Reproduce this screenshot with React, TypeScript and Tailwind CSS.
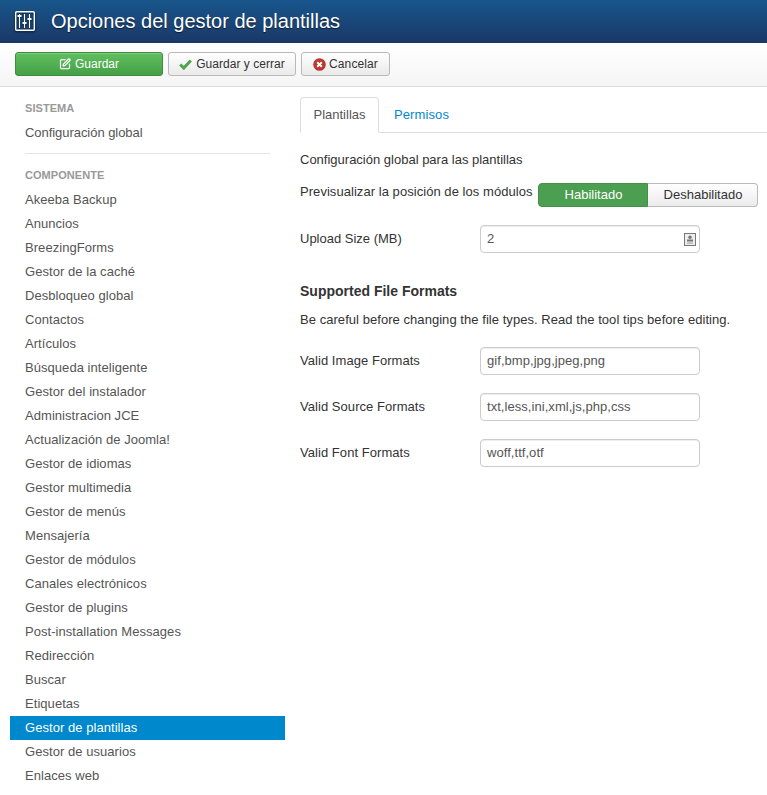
import React from 'react';
import { PenSquare } from 'lucide-react';

const components = [
  'Akeeba Backup',
  'Anuncios',
  'BreezingForms',
  'Gestor de la caché',
  'Desbloqueo global',
  'Contactos',
  'Artículos',
  'Búsqueda inteligente',
  'Gestor del instalador',
  'Administracion JCE',
  'Actualización de Joomla!',
  'Gestor de idiomas',
  'Gestor multimedia',
  'Gestor de menús',
  'Mensajería',
  'Gestor de módulos',
  'Canales electrónicos',
  'Gestor de plugins',
  'Post-installation Messages',
  'Redirección',
  'Buscar',
  'Etiquetas',
  'Gestor de plantillas',
  'Gestor de usuarios',
  'Enlaces web',
];

const formats = [
  { label: 'Valid Image Formats', value: 'gif,bmp,jpg,jpeg,png' },
  { label: 'Valid Source Formats', value: 'txt,less,ini,xml,js,php,css' },
  { label: 'Valid Font Formats', value: 'woff,ttf,otf' },
];

function SlidersIcon() {
  return (
    <svg width="20" height="20" viewBox="0 0 20 20" fill="none" stroke="white" className="drop-shadow-[0_1px_1px_rgba(0,0,0,0.7)]">
      <rect x="0.7" y="0.7" width="18.6" height="18.6" rx="1" strokeWidth="1.4" />
      <path d="M4.5 3v14M9.5 3v14M14.5 3v14" strokeWidth="1.1" />
      <path d="M2.5 5h4M7.5 12h4M12.5 8h4" strokeWidth="2.2" />
    </svg>
  );
}

function ContactIcon() {
  return (
    <svg width="12" height="13" viewBox="0 0 12 13" className="absolute right-[3px] top-[7px]">
      <rect x="0.5" y="0.5" width="11" height="12" fill="#ededed" stroke="#777" />
      <circle cx="6" cy="4.2" r="1.7" fill="#777" />
      <rect x="3" y="6.5" width="6" height="2" fill="#777" />
      <rect x="3" y="9.5" width="6" height="1.2" fill="#aaa" />
    </svg>
  );
}

function CheckIcon() {
  return (
    <svg width="13" height="11" viewBox="0 0 13 11" fill="none" stroke="#51a351" strokeWidth="3">
      <path d="M1.2 5.5l3.6 3.6 7-7.6" />
    </svg>
  );
}

function CancelIcon() {
  return (
    <svg width="13" height="13" viewBox="0 0 13 13" fill="none">
      <circle cx="6.5" cy="6.5" r="6.3" fill="#bd362f" />
      <path d="M4.2 4.2l4.6 4.6M8.8 4.2l-4.6 4.6" stroke="white" strokeWidth="2" />
    </svg>
  );
}

export default function App() {
  return (
    <div className="w-[767px] h-[795px] overflow-hidden bg-white text-[13px] text-[#333] font-['Liberation_Sans',Arial,sans-serif]">
      <header className="h-[43px] flex items-center pl-[15px] pb-[1px] bg-gradient-to-b from-[#17568c] to-[#1a3867]">
        <SlidersIcon />
        <h1 className="ml-[16px] text-[20px] leading-[24px] text-white [text-shadow:0_1px_1px_rgba(0,0,0,0.6)]">
          Opciones del gestor de plantillas
        </h1>
      </header>

      <div className="h-[44px] flex items-start gap-[5px] pl-[15px] pt-[9px] bg-gradient-to-b from-white to-[#f5f5f5] border-b border-[#dcdcdc]">
        <button className="w-[148px] h-[24px] flex items-center justify-center gap-[4px] rounded-[3px] border border-[#3f8b3f] bg-gradient-to-b from-[#5fbf5f] to-[#46a046] text-white text-[12px] shadow-[inset_0_1px_0_rgba(255,255,255,0.2)]">
          <PenSquare size={12} strokeWidth={2.5} />
          Guardar
        </button>
        <button className="w-[128px] h-[24px] flex items-center justify-center gap-[4px] rounded-[3px] border border-[#b9b9b9] bg-gradient-to-b from-white to-[#eaeaea] text-[#333] text-[12px] tracking-[0.03px]">
          <CheckIcon />
          Guardar y cerrar
        </button>
        <button className="w-[89px] h-[24px] flex items-center justify-center gap-[3px] rounded-[3px] border border-[#b9b9b9] bg-gradient-to-b from-white to-[#eaeaea] text-[#333] text-[12px] tracking-[0.1px]">
          <CancelIcon />
          Cancelar
        </button>
      </div>

      <div className="flex">
        <aside className="w-[275px] ml-[10px] pt-[9px] shrink-0 tracking-[0.05px]">
          <div className="h-[24px] pl-[15px] flex items-center text-[11px] font-bold text-[#999] uppercase">Sistema</div>
          <div className="h-[24px] pl-[15px] mt-[1px] flex items-center text-[#555] tracking-[-0.05px]">Configuración global</div>
          <div className="mx-[15px] mt-[8px] mb-[9px] border-t border-[#e5e5e5]" />
          <div className="h-[24px] pl-[15px] mb-[1px] flex items-center text-[11px] font-bold text-[#999] uppercase">Componente</div>
          {components.map((name) => (
            <div
              key={name}
              className={`h-[24px] pl-[15px] flex items-center ${
                name === 'Gestor de plantillas' ? 'bg-[#0088cc] text-white' : 'text-[#555]'
              }`}
            >
              {name}
            </div>
          ))}
        </aside>

        <main className="ml-[15px] flex-1 pt-[10px]">
          <div className="h-[36px] flex border-b border-[#ddd]">
            <div className="w-[79px] h-[36px] flex items-center justify-center rounded-t-[4px] border border-[#ddd] border-b-white bg-white text-[#555]">
              Plantillas
            </div>
            <div className="h-[35px] pl-[15px] flex items-center text-[#0088cc] tracking-[0.1px]">Permisos</div>
          </div>

          <p className="mt-[18px] leading-[18px]">Configuración global para las plantillas</p>

          <div className="mt-[14px] flex items-start">
            <span className="w-[238px] leading-[18px] whitespace-nowrap tracking-[0.05px]">Previsualizar la posición de los módulos</span>
            <div className="flex h-[24px]">
              <div className="w-[110px] pl-[1px] flex items-center justify-center rounded-l-[4px] bg-[#4c9f50] text-white border border-[#43904a]">
                Habilitado
              </div>
              <div className="w-[110px] pl-[1px] flex items-center justify-center rounded-r-[4px] border border-l-0 border-[#bbb] bg-gradient-to-b from-white to-[#ebebeb] text-[#333]">
                Deshabilitado
              </div>
            </div>
          </div>

          <div className="mt-[18px] flex items-center">
            <label className="w-[180px]">Upload Size (MB)</label>
            <div className="relative w-[220px] h-[28px] px-[6px] flex items-center rounded-[4px] border border-[#ccc] bg-white text-[#555] shadow-[inset_0_1px_1px_rgba(0,0,0,0.075)]">
              2
              <ContactIcon />
            </div>
          </div>

          <h3 className="mt-[28px] text-[14px] leading-[20px] font-bold">Supported File Formats</h3>
          <p className="mt-[10px] leading-[18px] tracking-[0.05px]">Be careful before changing the file types. Read the tool tips before editing.</p>

          <div className="mt-[18px] flex flex-col gap-[18px]">
            {formats.map((f) => (
              <div key={f.label} className="flex items-center">
                <label className="w-[180px] tracking-[0.05px]">{f.label}</label>
                <div className="w-[220px] h-[28px] px-[6px] flex items-center rounded-[4px] border border-[#ccc] bg-white text-[#555] tracking-[0.05px] shadow-[inset_0_1px_1px_rgba(0,0,0,0.075)]">
                  {f.value}
                </div>
              </div>
            ))}
          </div>
        </main>
      </div>
    </div>
  );
}
